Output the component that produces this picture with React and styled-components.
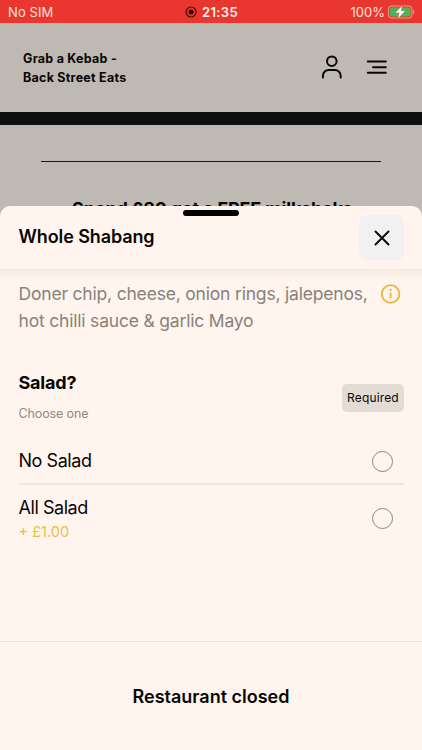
import styled, { createGlobalStyle } from "styled-components";

const GlobalStyle = createGlobalStyle`
    * {
        box-sizing: border-box;
    }

    body {
        margin: 0;
        font-family: Inter, "Liberation Sans", sans-serif;
        color: #080606;
        background-color: #beb9b3;
    }

    h1, h2, h3, p {
        margin: 0;
    }

    button {
        font: inherit;
        color: inherit;
        border: 0;
        padding: 0;
        background: none;
    }

    svg {
        display: block;
    }
`;

const Screen = styled.div`
    position: relative;
    height: 750px;
    width: 422px;
    overflow: hidden;
`;

const StatusBar = styled.div`
    display: grid;
    grid-template-columns: 1fr auto 1fr;
    align-items: center;
    height: 23px;
    padding: 1px 7px 0 8px;
    background-color: #e9372f;
    color: #ffe3dc;
    font-size: 13px;
    line-height: 22px;
`;

const Clock = styled.div`
    display: flex;
    align-items: center;
    gap: 5px;
    color: #fff4ef;
    font-weight: 600;
    letter-spacing: 0.35px;
`;

const Battery = styled.div`
    display: flex;
    align-items: center;
    justify-content: flex-end;
    gap: 3px;
`;

const Carrier = styled.span`
    letter-spacing: 0.1px;
`;

const Header = styled.header`
    display: flex;
    align-items: center;
    justify-content: space-between;
    height: 89px;
    padding: 0 34px 0 23px;
`;

const Brand = styled.h1`
    font-size: 12.5px;
    font-weight: 700;
    line-height: 19px;
    letter-spacing: 0.25px;
`;

const HeaderActions = styled.div`
    display: flex;
    align-items: center;
    gap: 23px;
    padding-bottom: 2px;
`;

const Banner = styled.div`
    height: 13px;
    background-color: #0e0f0e;
`;

const Promo = styled.section`
    padding: 36px 41px 0;
`;

const PromoText = styled.h2`
    margin-top: 34px;
    padding-left: 3px;
    font-size: 18px;
    font-weight: 700;
    line-height: 26px;
    letter-spacing: -0.16px;
    text-align: center;
    white-space: nowrap;
`;

const PromoLine = styled.div`
    height: 1px;
    background-color: #18171a;
`;

const Sheet = styled.section`
    position: absolute;
    top: 206px;
    left: 0;
    right: 0;
    bottom: 0;
    display: flex;
    flex-direction: column;
    border-radius: 10px 10px 0 0;
    background-color: #fff5ee;
`;

const Handle = styled.div`
    position: absolute;
    top: 4px;
    left: 183px;
    width: 56px;
    height: 6px;
    border-radius: 3px;
    background-color: #000;
`;

const SheetHeader = styled.div`
    display: flex;
    align-items: center;
    justify-content: space-between;
    height: 63px;
    flex: none;
    padding: 0 18px 0 18.5px;
`;

const SheetTitle = styled.h2`
    font-size: 18px;
    font-weight: 600;
    line-height: 24px;
    letter-spacing: -0.1px;
    margin-top: -2px;
`;

const CloseButton = styled.button`
    display: flex;
    align-items: center;
    justify-content: center;
    width: 45px;
    height: 45px;
    border-radius: 8px;
    background-color: #f2f1f1;
`;

const SheetBody = styled.div`
    flex: 1;
    padding: 11px 18px 0 18.5px;
    background: linear-gradient(#f4e9e3, #fff5ee 10px);
`;

const Description = styled.div`
    display: flex;
    justify-content: space-between;
    align-items: flex-start;

    svg {
        margin: 4px 3px 0 0;
    }
`;

const DescriptionText = styled.p`
    font-size: 17.5px;
    line-height: 27px;
    letter-spacing: -0.19px;
    color: #88827c;
    white-space: nowrap;
`;

const GroupHeader = styled.div`
    display: flex;
    justify-content: space-between;
    margin-top: 37px;
`;

const GroupTitle = styled.h3`
    font-size: 18px;
    font-weight: 700;
    line-height: 24px;
    letter-spacing: -0.2px;
`;

const Hint = styled.p`
    margin-top: 11px;
    font-size: 12.5px;
    line-height: 16px;
    letter-spacing: -0.12px;
    color: #918a84;
`;

const Required = styled.span`
    margin-top: 13px;
    width: 62px;
    height: 28px;
    border-radius: 5px;
    background-color: #e3dcd5;
    font-size: 12px;
    line-height: 28px;
    letter-spacing: 0.15px;
    text-align: center;
`;

const Option = styled.label`
    display: flex;
    align-items: center;
    justify-content: space-between;
    height: ${props => props.$height}px;
    padding-right: 11px;
    border-bottom: ${props => props.$last ? "0" : "2px solid #f0e5df"};
`;

const OptionName = styled.span`
    display: block;
    font-size: 18px;
    line-height: 24px;
    letter-spacing: -0.45px;
`;

const Price = styled.span`
    display: block;
    margin-top: 2px;
    font-size: 14.5px;
    line-height: 20px;
    color: #e9bd4b;
`;

const Radio = styled.input`
    appearance: none;
    width: 21px;
    height: 21px;
    margin: 0;
    border: 1px solid #8b847f;
    border-radius: 50%;
`;

const Options = styled.div`
    margin-top: 17px;
`;

const Footer = styled.footer`
    display: flex;
    align-items: center;
    justify-content: center;
    height: 109px;
    flex: none;
    border-top: 1px solid #eadfda;
    font-size: 18px;
    font-weight: 600;
`;

const options = [
    { name: "No Salad", height: 46 },
    { name: "All Salad", price: "+ £1.00", height: 67 }
];

function RecordIcon() {
    return (
        <svg width="12" height="12" viewBox="0 0 12 12">
            <circle cx="6" cy="6" r="5" fill="none" stroke="#4c0907" strokeWidth="1.2" />
            <circle cx="6" cy="6" r="2.5" fill="#2a0403" />
        </svg>
    );
}

function BatteryIcon() {
    return (
        <svg width="27" height="14" viewBox="0 0 27 14">
            <rect x="0.5" y="1" width="23.5" height="12" rx="3" fill="none" stroke="#f39b85" />
            <rect x="2" y="2.5" width="20.5" height="9" rx="1.8" fill="#46b75a" />
            <path d="M25.2 5v4c1.5-.6 1.5-3.4 0-4z" fill="#f39b85" />
            <path d="M14.4.3 7 7.9h4.1L9.7 13.7l7.9-7.9h-4.3z" fill="#fff" stroke="#e9372f" strokeWidth="0.4" />
        </svg>
    );
}

function UserIcon() {
    return (
        <svg width="22" height="24" viewBox="0 0 22 24" fill="none" stroke="#080606" strokeWidth="2" strokeLinecap="round">
            <circle cx="10.8" cy="6.2" r="4.8" />
            <path d="M1.9 22.4v-1.5a5.8 5.8 0 0 1 5.8-5.8h6.2a5.8 5.8 0 0 1 5.8 5.8v1.5" />
        </svg>
    );
}

function MenuIcon() {
    return (
        <svg width="22" height="16" viewBox="0 0 22 16" fill="none" stroke="#080606" strokeWidth="2" strokeLinecap="round">
            <path d="M1.8 2.5h18M7 8.2h12.8M1.8 13.7h18" />
        </svg>
    );
}

function CloseIcon() {
    return (
        <svg width="16" height="16" viewBox="0 0 16 16" fill="none" stroke="#080606" strokeWidth="1.9" strokeLinecap="round">
            <path d="m1.5 1.5 13 13M14.5 1.5l-13 13" />
        </svg>
    );
}

function InfoIcon() {
    return (
        <svg width="20" height="20" viewBox="0 0 20 20" fill="none" stroke="#e8b63c">
            <circle cx="9.6" cy="10" r="8.8" strokeWidth="1.8" />
            <path d="M9.6 8.4v6" strokeWidth="1.7" />
            <circle cx="9.6" cy="5.9" r="1.1" fill="#e8b63c" stroke="none" />
        </svg>
    );
}

function App() {
    return (
        <Screen>
            <GlobalStyle />
            <StatusBar>
                <Carrier>No SIM</Carrier>
                <Clock><RecordIcon />21:35</Clock>
                <Battery>100%<BatteryIcon /></Battery>
            </StatusBar>
            <Header>
                <Brand>Grab a Kebab -<br />Back Street Eats</Brand>
                <HeaderActions>
                    <UserIcon />
                    <MenuIcon />
                </HeaderActions>
            </Header>
            <Banner />
            <Promo>
                <PromoLine />
                <PromoText>Spend £80 get a FREE milkshake</PromoText>
            </Promo>
            <Sheet>
                <Handle />
                <SheetHeader>
                    <SheetTitle>Whole Shabang</SheetTitle>
                    <CloseButton aria-label="Close"><CloseIcon /></CloseButton>
                </SheetHeader>
                <SheetBody>
                    <Description>
                        <DescriptionText>
                            Doner chip, cheese, onion rings, jalepenos,<br />
                            hot chilli sauce &amp; garlic Mayo
                        </DescriptionText>
                        <InfoIcon />
                    </Description>
                    <GroupHeader>
                        <div>
                            <GroupTitle>Salad?</GroupTitle>
                            <Hint>Choose one</Hint>
                        </div>
                        <Required>Required</Required>
                    </GroupHeader>
                    <Options>
                        {options.map((option, i) => (
                            <Option key={option.name} $height={option.height} $last={i === options.length - 1}>
                                <span>
                                    <OptionName>{option.name}</OptionName>
                                    {option.price ? <Price>{option.price}</Price> : null}
                                </span>
                                <Radio type="radio" name="salad" />
                            </Option>
                        ))}
                    </Options>
                </SheetBody>
                <Footer>Restaurant closed</Footer>
            </Sheet>
        </Screen>
    );
}

export default App;
